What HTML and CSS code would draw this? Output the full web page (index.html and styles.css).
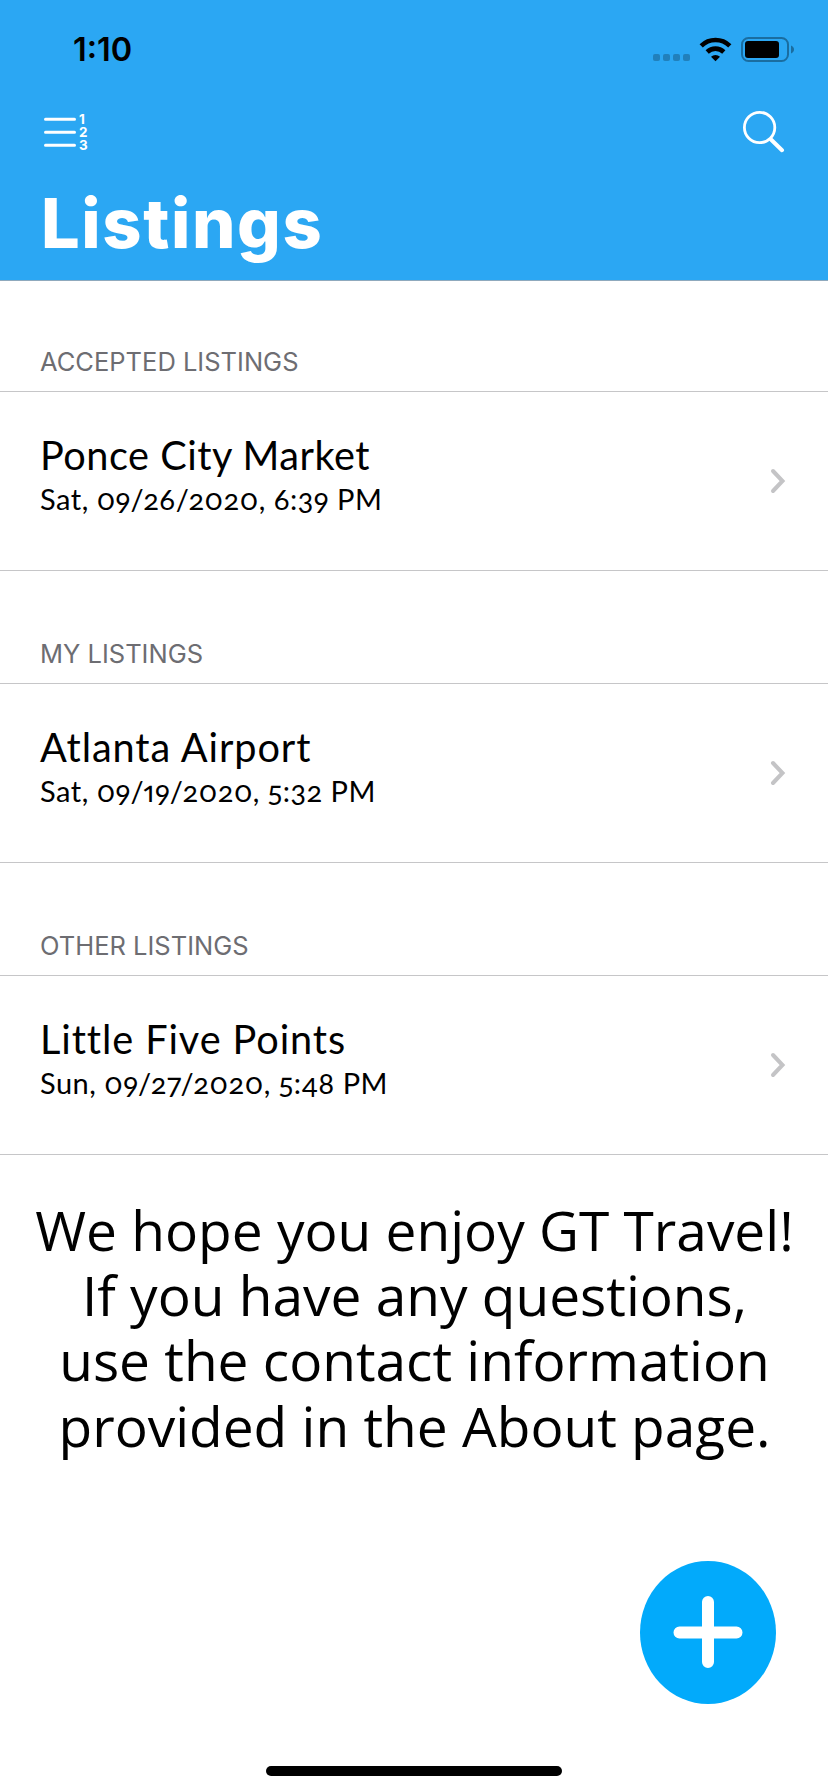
FILE: index.html
```html
<!DOCTYPE html>
<html lang="en">
<head>
<meta charset="utf-8">
<title>Listings</title>
<link rel="stylesheet" href="styles.css">
</head>
<body>
<div class="screen">
  <header class="header">
    <div class="status">
      <span class="clock">1:10</span>
      <svg class="status-icons" width="144" height="28" viewBox="652 35 144 28">
        <g fill="#2180bb">
          <rect x="653" y="54" width="7" height="7" rx="2"/><rect x="663" y="54" width="7" height="7" rx="2"/>
          <rect x="673" y="54" width="7" height="7" rx="2"/><rect x="683" y="54" width="7" height="7" rx="2"/>
        </g>
        <g fill="none" stroke="#000" stroke-width="4.6">
          <path d="M701.200 45.800a20.500 20.500 0 0 1 28.600 0"/>
          <path d="M707.200 52a12 12 0 0 1 16.600 0"/>
        </g>
        <path d="M711 56.700a6.800 6.800 0 0 1 9 0L715.500 61.200z"/>
        <rect x="742" y="38" width="46" height="23" rx="6.500" fill="none" stroke="#1a6da0" stroke-width="2"/>
        <rect x="745" y="41" width="34" height="17" rx="3"/>
        <path d="M791 45.500c4 1.500 4 6.500 0 8z" fill="#1a6da0"/>
      </svg>
    </div>
    <nav class="nav">
      <svg width="46" height="40" viewBox="43 112 46 40">
        <path d="M45.500 119.200H74.500M45.500 132.300H74.500M45.500 145.200H74.500" stroke="#fff" stroke-width="3" stroke-linecap="round"/>
        <g class="digits"><text x="79" y="124">1</text><text x="79" y="137">2</text><text x="79" y="150">3</text></g>
      </svg>
      <svg width="44" height="44" viewBox="741 109 44 44" fill="none" stroke="#fff" stroke-linecap="round">
        <circle cx="759.600" cy="127.500" r="15.200" stroke-width="2.800"/>
        <path d="M771 139.500L782 150.200" stroke-width="4"/>
      </svg>
    </nav>
    <h1 class="title">Listings</h1>
  </header>
  <main>
    <section class="group">
      <h2 class="group-label accepted">ACCEPTED LISTINGS</h2>
      <div class="row">
        <div><p class="name snug">Ponce City Market</p><p class="date">Sat, 09/26/2020, 6:39 PM</p></div>
        <svg class="chevron" width="16" height="26" viewBox="0 0 16 26"><path d="M3 3L12.500 13L3 23"/></svg>
      </div>
    </section>
    <section class="group">
      <h2 class="group-label">MY LISTINGS</h2>
      <div class="row">
        <div><p class="name">Atlanta Airport</p><p class="date">Sat, 09/19/2020, 5:32 PM</p></div>
        <svg class="chevron" width="16" height="26" viewBox="0 0 16 26"><path d="M3 3L12.500 13L3 23"/></svg>
      </div>
    </section>
    <section class="group">
      <h2 class="group-label">OTHER LISTINGS</h2>
      <div class="row">
        <div><p class="name">Little Five Points</p><p class="date">Sun, 09/27/2020, 5:48 PM</p></div>
        <svg class="chevron" width="16" height="26" viewBox="0 0 16 26"><path d="M3 3L12.500 13L3 23"/></svg>
      </div>
    </section>
    <p class="note">We hope you enjoy GT Travel!<br>If you have any questions,<br>use the contact information<br>provided in the About page.</p>
  </main>
  <svg class="add" width="136" height="143" viewBox="0 0 136 143">
    <ellipse cx="68" cy="71.500" rx="68" ry="71.500" fill="#02aafb"/>
    <path d="M39.500 71.500H96.500M68 41V101" stroke="#fff" stroke-width="12" stroke-linecap="round"/>
  </svg>
  <div class="home"></div>
</div>
</body>
</html>
```
FILE: styles.css
```css
* { box-sizing: border-box; margin: 0; padding: 0; }
body { background: #fff; color: #000; }
svg { display: block; flex: none; }
.screen { position: relative; width: 828px; height: 1792px; display: flex; flex-direction: column; overflow: hidden; }
.header { height: 281px; background: #2ba7f3; border-bottom: 1px solid #8fa9bd; }
.status { height: 88px; padding: 35px 32px 0 73px; display: flex; justify-content: space-between; align-items: flex-start; }
.clock { font: 600 32.500px/30px Inter, sans-serif; }
.nav { height: 93px; padding: 21px 43px 0; display: flex; justify-content: space-between; align-items: flex-start; }
.nav svg:first-child { margin-top: 3px; }
.digits { font: 700 13.500px Inter, sans-serif; fill: #fff; }
.title { padding: 3px 0 0 41px; font: 800 68.500px/80px Inter, sans-serif; letter-spacing: 1.600px; color: #fff; }
.group-label { height: 112px; padding: 0 0 13px 40px; display: flex; align-items: flex-end; font: 400 25.500px/32px Inter, sans-serif; color: #6d6d72; }
.group-label.accepted { height: 110px; }
.row { height: 180px; padding: 39px 42px 0 40px; border-top: 1px solid #c6c6c8; border-bottom: 1px solid #c6c6c8; display: flex; justify-content: space-between; }
.name { font: 400 39.700px/48px Lato, sans-serif; letter-spacing: .9px; white-space: nowrap; }
.name.snug { letter-spacing: .5px; }
.date { margin-top: 2px; font: 400 29px/36px Lato, sans-serif; letter-spacing: .5px; font-variant-numeric: oldstyle-nums proportional-nums; white-space: nowrap; }
.chevron { margin-top: 37px; fill: none; stroke: #c4c4c6; stroke-width: 4; stroke-linecap: round; }
.note { padding: 42px 0 0 1px; text-align: center; font: 400 55px/65.200px "Open Sans", sans-serif; }
.add { position: absolute; left: 640px; top: 1561px; }
.home { width: 296px; height: 10px; margin: auto auto 16px; border-radius: 5px; background: #000; }
```
